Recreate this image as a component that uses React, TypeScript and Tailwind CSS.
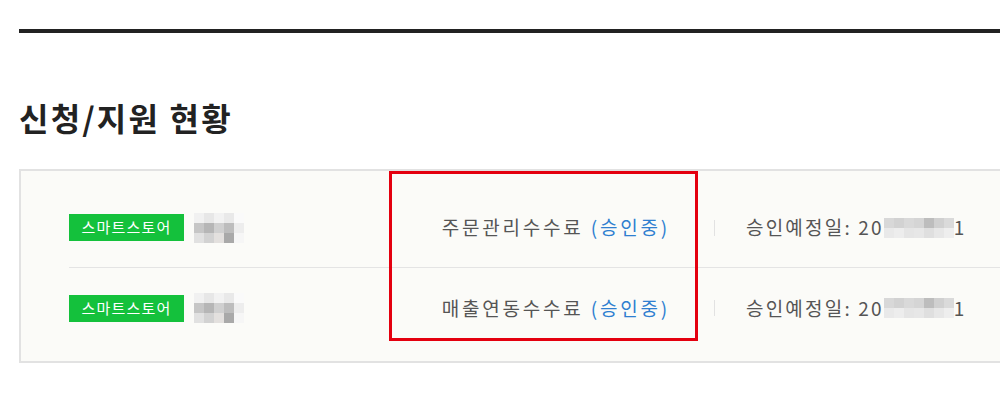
import React from "react";

const nameMosaic = [
  ["#f1f1f1", "#e7e7e7", "#f2f2f2", "#e9e9e9", "#fafafa"],
  ["#c6c6c6", "#b6b6b6", "#d0d0d0", "#bdbdbd", "#ededed"],
  ["#e1e1e1", "#d2d2d2", "#e3e0de", "#a9a9a9", "#f6f6f6"],
];

const dateMosaic = [
  ["#d8d8d8", "#d2d2d2", "#d9d9d9", "#d5d5d5", "#bdbdbd", "#d0d0d0", "#dadada"],
  ["#e9e9e9", "#ededed", "#e5e5e5", "#e7e7e7", "#dfdfdf", "#e7e7e7", "#eeeeee"],
];

function Mosaic({ cells }: { cells: string[][] }) {
  return (
    <span className="inline-flex flex-col align-middle">
      {cells.map((row, i) => (
        <span key={i} className="flex">
          {row.map((c, j) => (
            <span key={j} className="block w-[10px] h-[10px]" style={{ backgroundColor: c }} />
          ))}
        </span>
      ))}
    </span>
  );
}

function Row({ fee, last }: { fee: string; last?: boolean }) {
  return (
    <div className={`flex items-center h-[80px] ${last ? "" : "border-b border-[#e4e4e4]"}`}>
      <div className="w-[350px] flex items-center">
        <span className="inline-flex items-center justify-center w-[115px] h-[27px] bg-[#14c13c] text-white text-[15px] tracking-[1.2px]">
          스마트스토어
        </span>
        <span className="ml-[10px]">
          <Mosaic cells={nameMosaic} />
        </span>
      </div>
      <div className="w-[251px] text-right text-[19px] tracking-[2.8px] text-[#555] whitespace-nowrap">
        {fee} <span className="text-[#2f7fd0]">(승인중)</span>
      </div>
      <div className="ml-[44px] w-px h-[16px] bg-[#e2e2e2]" />
      <div className="ml-[31px] flex items-center text-[19px] tracking-[2.2px] text-[#555] whitespace-nowrap">
        <span>승인예정일: 20</span>
        <Mosaic cells={dateMosaic} />
        <span>1</span>
      </div>
    </div>
  );
}

export default function App() {
  return (
    <div
      className="relative w-[1000px] h-[412px] overflow-hidden bg-white pl-[19px]"
      style={{ fontFamily: '"Noto Sans CJK KR", "Noto Sans", sans-serif' }}
    >
      <div className="mt-[29px] h-[4px] bg-[#222]" />
      <h2 className="mt-[63px] text-[32px] font-bold text-[#222] leading-[42px] tracking-[2.2px]">
        신청/지원 현황
      </h2>
      <div className="mt-[31px] w-[1100px] border-2 border-[#e2e2e2] bg-[#fbfbf8] pl-[48px] pt-[17px] pb-[13px]">
        <Row fee="주문관리수수료" />
        <Row fee="매출연동수수료" last />
      </div>
      <div className="absolute left-[389px] top-[171px] w-[309px] h-[170px] border-[3px] border-[#e4000f]" />
    </div>
  );
}
